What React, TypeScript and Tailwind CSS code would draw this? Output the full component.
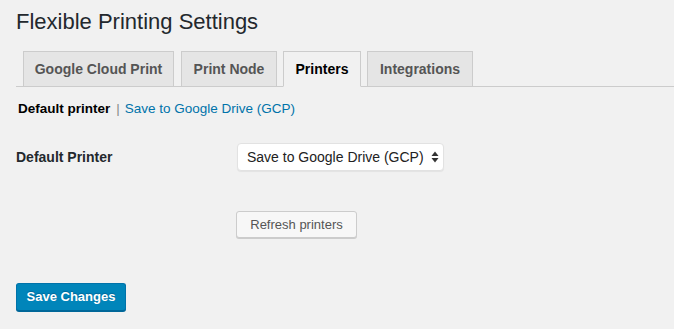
import React from "react";

const tabs = [
  { label: "Google Cloud Print", w: "w-[151px]", ml: "ml-[7px]", active: false },
  { label: "Print Node", w: "w-[96px]", ml: "ml-[7px]", active: false },
  { label: "Printers", w: "w-[78px]", ml: "ml-[6px]", active: true },
  { label: "Integrations", w: "w-[106px]", ml: "ml-[6px]", active: false },
];

function SelectArrows() {
  return (
    <svg width="8" height="12" viewBox="0 0 8 12" className="shrink-0">
      <path d="M4 0.5 L7.5 5 L0.5 5 Z" fill="#333" />
      <path d="M4 11.5 L7.5 7 L0.5 7 Z" fill="#333" />
    </svg>
  );
}

export default function App() {
  return (
    <div className="min-h-screen bg-[#f1f1f1] pl-4 font-['Liberation_Sans',Arial,sans-serif] text-[#23282d]">
      <h1 className="pt-[7px] text-[22px] leading-[30px] font-normal">Flexible Printing Settings</h1>

      {/* tab bar */}
      <div className="mt-[14px] flex h-[36px] border-b border-[#ccc]">
        {tabs.map((t) => (
          <div
            key={t.label}
            className={`${t.w} ${t.ml} -mb-px flex h-[36px] items-center justify-center border border-[#ccc] text-[14px] font-bold ${
              t.active ? "border-b-[#f1f1f1] bg-[#f1f1f1] text-black" : "bg-[#e5e5e5] text-[#555]"
            }`}
          >
            {t.label}
          </div>
        ))}
      </div>

      {/* subsubsub */}
      <div className="ml-[2px] mt-[12px] flex items-center text-[13.5px] leading-[20px]">
        <span className="font-bold text-black">Default printer</span>
        <span className="ml-[6px] text-[#888]">|</span>
        <span className="ml-[5px] text-[#0073aa]">Save to Google Drive (GCP)</span>
      </div>

      {/* form row */}
      <div className="mt-[24px] flex items-center">
        <div className="w-[221px] text-[14px] font-bold">Default Printer</div>
        <div className="flex h-[28px] w-[207px] items-center justify-between rounded-[4px] border border-[#e2e2e2] bg-white pl-[9px] pr-[4px] text-[14px] text-[#222] shadow-[0_1px_1px_rgba(0,0,0,0.06)]">
          <span>Save to Google Drive (GCP)</span>
          <SelectArrows />
        </div>
      </div>

      <div className="ml-[220px] mt-[40px]">
        <button className="flex h-[27px] w-[121px] items-center justify-center rounded-[3px] border border-[#ccc] bg-[#f7f7f7] text-[13px] text-[#555] shadow-[0_1px_0_#ccc]">
          Refresh printers
        </button>
      </div>

      <div className="mt-[45px]">
        <button className="flex h-[28px] w-[110px] items-center justify-center rounded-[3px] border border-[#0073aa] border-b-[#006799] bg-[#0085ba] text-[13px] font-bold text-white shadow-[0_1px_0_#006799] [text-shadow:0_-1px_1px_#006799]">
          Save Changes
        </button>
      </div>
    </div>
  );
}
